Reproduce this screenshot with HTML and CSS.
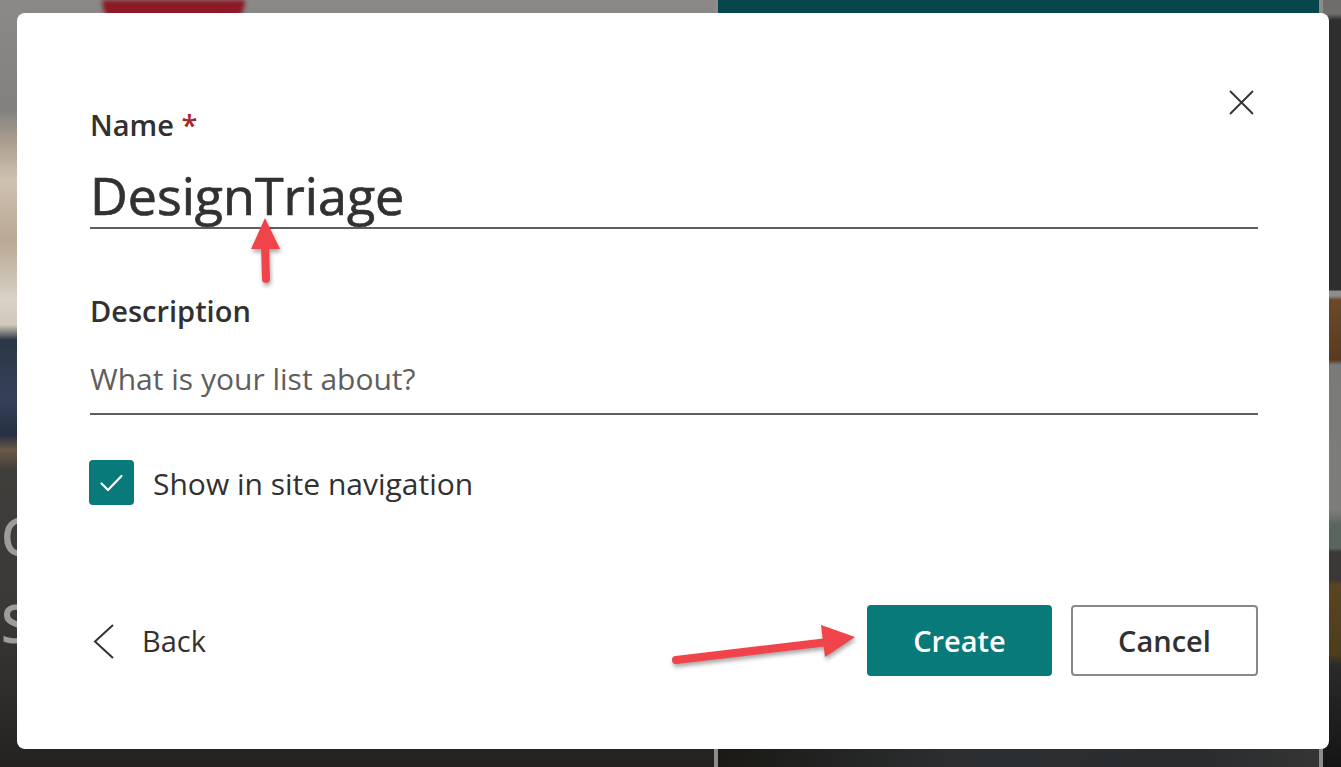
FILE: index.html
```html
<!DOCTYPE html>
<html lang="en">
<head>
<meta charset="utf-8">
<title>Create list</title>
<link rel="stylesheet" href="styles.css">
</head>
<body>
<div class="backdrop">
  <div class="tile tile-a">
    <div class="blob"></div>
    <div class="tile-text">
      <span>C</span>
      <span>S</span>
    </div>
  </div>
  <div class="tile tile-b"></div>
  <div class="tile tile-c"></div>
</div>

<div class="dialog" role="dialog" aria-label="Create list">
  <button class="close" aria-label="Close">
    <svg width="25" height="25" viewBox="0 0 25 25"><path d="M1 1 L24 24 M24 1 L1 24" stroke="#323130" stroke-width="1.8" fill="none"/></svg>
  </button>
  <div class="form">
    <div class="label">Name <span class="req">*</span></div>
    <div class="field field-name">DesignTriage</div>
    <div class="label label-desc">Description</div>
    <div class="field field-desc">What is your list about?</div>
    <div class="check-row">
      <span class="checkbox">
        <svg width="45" height="45" viewBox="0 0 45 45"><path d="M12.5 23.5 L19 30 L32.5 16" stroke="#fff" stroke-width="2.2" fill="none" stroke-linecap="round" stroke-linejoin="round"/></svg>
      </span>
      <span class="check-text">Show in site navigation</span>
    </div>
  </div>
  <div class="footer">
    <button class="back">
      <svg width="24" height="36" viewBox="0 0 24 36"><path d="M23 2 L5 18.5 L23 35" stroke="#323130" stroke-width="2" fill="none"/></svg>
      <span>Back</span>
    </button>
    <div class="actions">
      <button class="btn btn-primary">Create</button>
      <button class="btn btn-default">Cancel</button>
    </div>
  </div>
</div>

<svg class="annot" width="1341" height="767" viewBox="0 0 1341 767">
  <g class="arrow">
    <line x1="266" y1="279" x2="265" y2="244" stroke="#f0444a" stroke-width="8" stroke-linecap="round"/>
    <polygon points="265,218 251,249 280,249" fill="#f0444a"/>
  </g>
  <g class="arrow">
    <line x1="676" y1="660" x2="828" y2="642" stroke="#f0444a" stroke-width="8" stroke-linecap="round"/>
    <polygon points="855,637 825,657 821,625" fill="#f0444a"/>
  </g>
</svg>
</body>
</html>
```
FILE: styles.css
```css
* { box-sizing: border-box; }

html, body {
  margin: 0;
  padding: 0;
}

body {
  width: 1341px;
  height: 767px;
  overflow: hidden;
  position: relative;
  font-family: "Open Sans", "Noto Sans", "Liberation Sans", sans-serif;
  color: #323130;
  background: #222;
}

/* ---------- backdrop page ---------- */
.backdrop {
  display: grid;
  grid-template-columns: 714px 601px 1fr;
  column-gap: 4px;
  height: 767px;
  background: #8d8c8a;
}

.tile {
  height: 767px;
  overflow: hidden;
}

.tile-a {
  display: flex;
  flex-direction: column;
  background: linear-gradient(to bottom,
    #8a8987 0px, #82817f 110px, #a89c8e 140px, #cfc2b2 180px,
    #b9a893 240px, #d9d2c6 300px, #cfc7b8 325px, #2c3646 340px,
    #35415a 400px, #263042 435px, #6a5a48 450px, #403e3b 470px,
    #3a3937 600px, #2f2e2c 690px, #232220 767px);
}

.blob {
  margin-left: 102px;
  width: 143px;
  height: 30px;
  background: #8c1a26;
  border-radius: 0 0 30px 30px;
  filter: blur(2px);
}

.tile-text {
  display: flex;
  flex-direction: column;
  margin-top: 462px;
  padding-left: 1px;
  font-size: 52px;
  font-weight: 600;
  line-height: 87px;
  color: #9d9c9a;
}

.tile-b {
  background:
    linear-gradient(to bottom, #05474a 0, #05474a 30px, transparent 30px),
    linear-gradient(to right, #1a1915 0, #2c2f31 40%, #2a2c2e 80%, #343434 100%);
}

.tile-c {
  background: linear-gradient(to bottom,
    #6f6d6b 0px, #6f6d6b 14px, #2e2e2e 20px, #2e2e2e 290px,
    #8c8c8c 291px, #8c8c8c 296px, #6b4a2a 300px, #5a3b20 360px,
    #7a7a78 365px, #7d7d7b 510px, #5b6560 525px, #5b6560 548px,
    #3b3835 552px, #3b3835 580px, #5a4520 585px, #4e3c1c 655px,
    #2a2a2a 665px, #151515 767px);
}

/* ---------- dialog ---------- */
.dialog {
  position: absolute;
  left: 17px;
  top: 13px;
  width: 1312px;
  height: 736px;
  background: #fff;
  border-radius: 8px;
  padding: 0 71px 73px 73px;
  display: flex;
  flex-direction: column;
}

.close {
  position: absolute;
  top: 77px;
  right: 75px;
  width: 25px;
  height: 25px;
  padding: 0;
  border: 0;
  background: transparent;
  display: flex;
}

.form {
  padding-top: 94px;
  display: flex;
  flex-direction: column;
}

.label {
  font-size: 29px;
  line-height: 36px;
  font-weight: 600;
  color: #323130;
}

.req {
  color: #a4262c;
}

.field {
  border-bottom: 2px solid #605e5c;
}

.field-name {
  margin-top: 20px;
  font-size: 52px;
  line-height: 64px;
  font-weight: 400;
  color: #323130;
  -webkit-text-stroke: 0.7px #323130;
}

.label-desc {
  margin-top: 64px;
}

.field-desc {
  margin-top: 24px;
  padding: 8px 0 16px;
  font-size: 30px;
  line-height: 36px;
  color: #605e5c;
}

.check-row {
  margin-top: 45px;
  margin-left: -1px;
  display: flex;
  align-items: center;
  gap: 19px;
}

.checkbox {
  width: 45px;
  height: 45px;
  border-radius: 4px;
  background: #077a79;
  display: flex;
}

.check-text {
  font-size: 30px;
  line-height: 36px;
  color: #323130;
  padding-top: 3px;
}

/* ---------- footer ---------- */
.footer {
  margin-top: auto;
  display: flex;
  justify-content: space-between;
  align-items: center;
}

.back {
  display: flex;
  align-items: center;
  gap: 28px;
  padding: 0;
  border: 0;
  background: transparent;
  font-family: inherit;
  font-size: 29px;
  line-height: 36px;
  color: #323130;
}

.actions {
  display: flex;
  gap: 19px;
}

.btn {
  height: 71px;
  border-radius: 4px;
  font-family: inherit;
  font-size: 29px;
  font-weight: 600;
  padding: 0;
}

.btn-primary {
  width: 185px;
  background: #077a79;
  border: 0;
  color: #fff;
}

.btn-default {
  width: 187px;
  background: #fff;
  border: 2px solid #8a8886;
  color: #323130;
}

/* ---------- annotation arrows ---------- */
.annot {
  position: absolute;
  left: 0;
  top: 0;
  pointer-events: none;
}

.arrow {
  filter: drop-shadow(1px 3px 2px rgba(0, 0, 0, 0.35));
}
```
